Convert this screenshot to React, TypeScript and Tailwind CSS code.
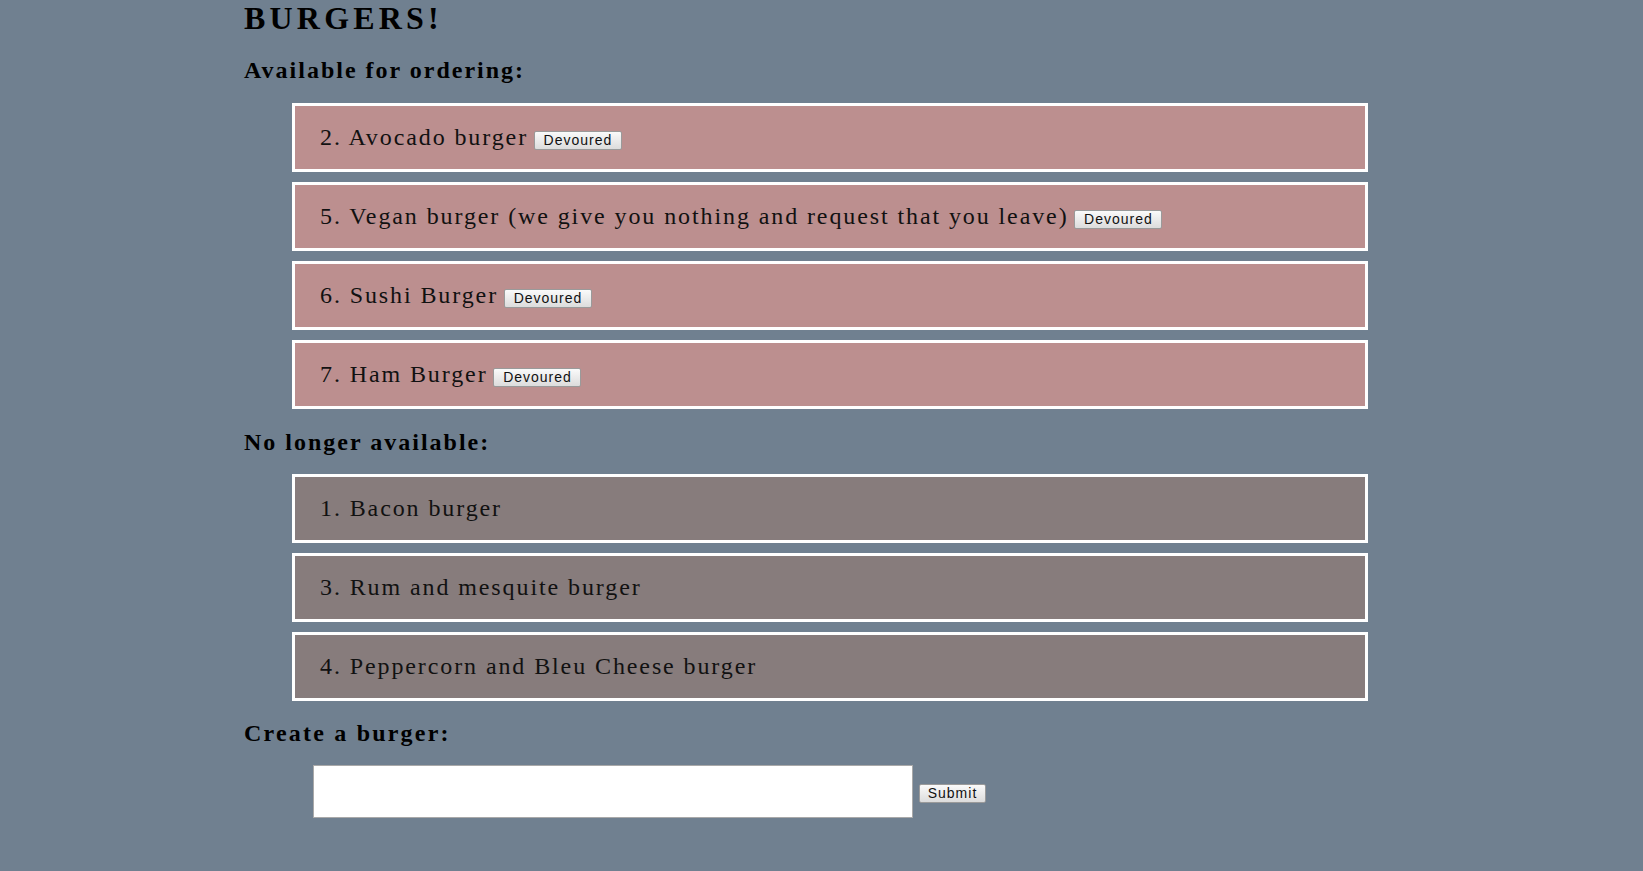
import React from "react";

const available = [
  "2. Avocado burger",
  "5. Vegan burger (we give you nothing and request that you leave)",
  "6. Sushi Burger",
  "7. Ham Burger",
];
const gone = ["1. Bacon burger", "3. Rum and mesquite burger", "4. Peppercorn and Bleu Cheese burger"];

function Btn({ label }: { label: string }) {
  return (
    <button className="inline-block w-[88px] h-[19px] align-baseline ml-[-2px] rounded-[2px] border border-[#9a9a9a] bg-gradient-to-b from-[#fafafa] to-[#dcdcdc] text-[14px] leading-[17px] tracking-[1px] text-[#111] font-['Liberation_Sans',Arial,sans-serif] text-center p-0">
      {label}
    </button>
  );
}

export default function App() {
  return (
    <div className="min-h-[871px] w-full bg-[#708090] font-['Liberation_Serif','Times_New_Roman',serif] text-black">
      <div className="ml-[244px] w-[1124px] flex flex-col">
        <h1 className="h-[36px] leading-[36px] text-[32px] font-bold tracking-[4.2px]">BURGERS!</h1>
        <h2 className="mt-[20px] h-[28px] leading-[28px] text-[24px] font-bold tracking-[2px]">
          Available for ordering:
        </h2>
        <ul className="mt-[19px] pl-[48px] flex flex-col gap-[10px]">
          {available.map((t) => (
            <li
              key={t}
              className="h-[69px] border-[3px] border-white bg-[#bc8f8f] pl-[25px] leading-[63px] text-[24px] tracking-[1.9px] text-[#111]"
            >
              {t} <Btn label="Devoured" />
            </li>
          ))}
        </ul>
        <h2 className="mt-[19px] h-[28px] leading-[28px] text-[24px] font-bold tracking-[2px]">
          No longer available:
        </h2>
        <ul className="mt-[18px] pl-[48px] flex flex-col gap-[10px]">
          {gone.map((t) => (
            <li
              key={t}
              className="h-[69px] border-[3px] border-white bg-[#877c7c] pl-[25px] leading-[63px] text-[24px] tracking-[1.9px] text-[#111]"
            >
              {t}
            </li>
          ))}
        </ul>
        <h2 className="mt-[18px] h-[28px] leading-[28px] text-[24px] font-bold tracking-[2.2px]">
          Create a burger:
        </h2>
        <form className="mt-[18px] pl-[69px] flex items-start gap-[6px]" onSubmit={(e) => e.preventDefault()}>
          <input type="text" className="w-[600px] h-[53px] bg-white border border-[#a9a9a9] outline-none" />
          <button
            type="submit"
            className="mt-[19px] w-[67px] h-[19px] rounded-[2px] border border-[#9a9a9a] bg-gradient-to-b from-[#fafafa] to-[#dcdcdc] text-[14px] leading-[17px] tracking-[1px] text-[#111] font-['Liberation_Sans',Arial,sans-serif] text-center p-0"
          >
            Submit
          </button>
        </form>
      </div>
    </div>
  );
}
